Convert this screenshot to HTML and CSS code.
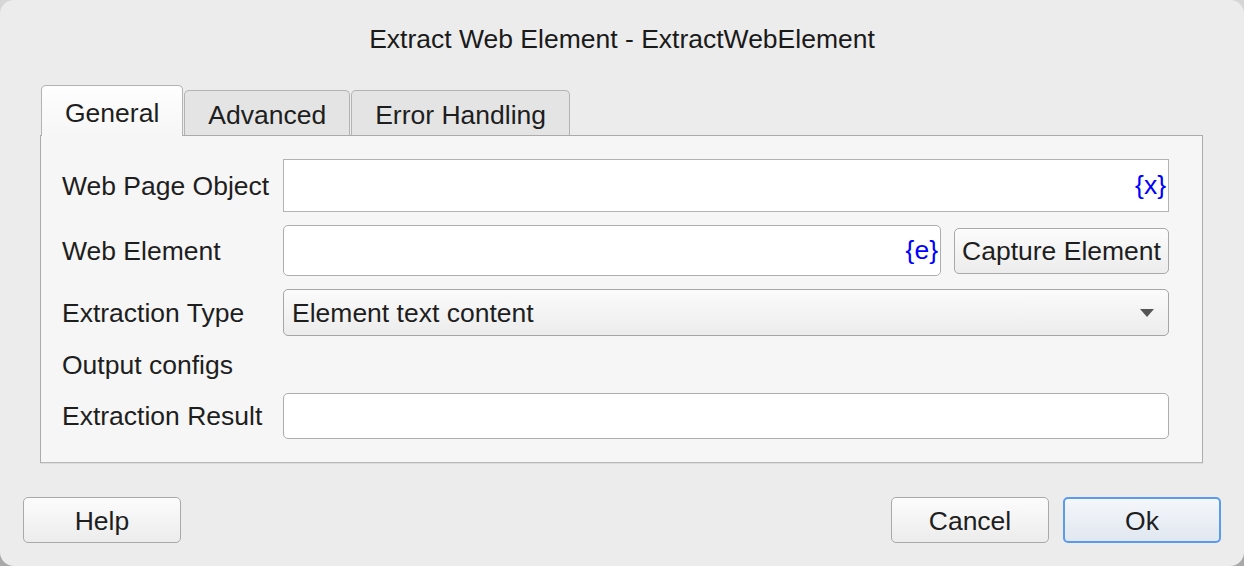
FILE: index.html
```html
<!DOCTYPE html>
<html>
<head>
<meta charset="utf-8">
<link rel="stylesheet" href="styles.css">
</head>
<body>
<div class="window">
  <div class="title">Extract Web Element - ExtractWebElement</div>
  <div class="tabs">
    <div class="tab active">General</div>
    <div class="tab">Advanced</div>
    <div class="tab">Error Handling</div>
  </div>
  <div class="panel">
    <div class="label">Web Page Object</div>
    <div class="field square"><span class="var">{x}</span></div>

    <div class="label">Web Element</div>
    <div class="split">
      <div class="field rounded"><span class="var">{e}</span></div>
      <div class="btn capture">Capture Element</div>
    </div>

    <div class="label">Extraction Type</div>
    <div class="select"><span>Element text content</span><span class="arrow"></span></div>

    <div class="label">Output configs</div>
    <div></div>

    <div class="label">Extraction Result</div>
    <div class="field rounded"></div>
  </div>
  <div class="footer">
    <div class="btn big">Help</div>
    <div class="right">
      <div class="btn big">Cancel</div>
      <div class="btn big primary">Ok</div>
    </div>
  </div>
</div>
</body>
</html>
```
FILE: styles.css
```css
html, body {
  margin: 0;
  padding: 0;
}
body {
  background: linear-gradient(#d6d6d6, #a8a8a8);
  width: 1244px;
  height: 566px;
  overflow: hidden;
  font-family: "Liberation Sans", Arial, sans-serif;
  font-size: 26.5px;
  color: #1e1e1e;
}
.window {
  box-sizing: border-box;
  width: 1244px;
  height: 566px;
  background: #ececec;
  border-radius: 14px;
  display: flex;
  flex-direction: column;
}
.title {
  height: 78px;
  line-height: 78px;
  text-align: center;
  color: #1a1a1a;
}
.tabs {
  display: flex;
  align-items: flex-end;
  margin: 7px 0 0 41px;
  height: 50px;
  position: relative;
  z-index: 1;
}
.tab {
  box-sizing: border-box;
  height: 45px;
  padding: 0 23px;
  margin-right: 1px;
  line-height: 48px;
  border: 1px solid #b3b3b3;
  border-bottom: none;
  border-radius: 5px 5px 0 0;
  background: #e4e4e4;
}
.tab.active {
  height: 51px;
  line-height: 54px;
  background: linear-gradient(#fefefe, #f6f6f6);
  margin-bottom: -1px;
}
.panel {
  box-sizing: border-box;
  margin: 0 41px 0 40px;
  height: 328px;
  background: #f6f6f6;
  border: 1px solid #ababab;
  border-bottom-color: #b8b8b8;
  box-shadow: 0 1px 0 #dcdcdc;
  padding: 23px 33px 0 21px;
  display: grid;
  grid-template-columns: 221px 1fr;
  grid-template-rows: 53px 51px 47px 31px 46px;
  row-gap: 13px;
}
.label {
  display: flex;
  align-items: center;
  padding-top: 1px;
}
.field {
  box-sizing: border-box;
  background: #fff;
  border: 1px solid #b3b3b3;
  display: flex;
  align-items: center;
  justify-content: flex-end;
  padding-right: 2px;
}
.field.rounded {
  border-radius: 5px;
  border-color: #adadad;
}
.var {
  color: #0000ff;
  font-size: 26.5px;
}
.split {
  display: flex;
  gap: 13px;
}
.split .field {
  flex: 1;
}
.btn {
  box-sizing: border-box;
  border: 1px solid #a9a9a9;
  border-radius: 5px;
  background: linear-gradient(#fcfcfc, #ececec);
  display: flex;
  align-items: center;
  justify-content: center;
  color: #1e1e1e;
}
.capture {
  margin: 3px 0 2px;
  width: 215px;
}
.select {
  box-sizing: border-box;
  border: 1px solid #a6a6a6;
  border-radius: 5px;
  background: linear-gradient(#fbfbfb, #ececec);
  display: flex;
  align-items: center;
  justify-content: space-between;
  padding: 1px 14px 0 8px;
}
.arrow {
  width: 0;
  height: 0;
  border-left: 7px solid transparent;
  border-right: 7px solid transparent;
  border-top: 8px solid #555;
}
.footer {
  display: flex;
  justify-content: space-between;
  padding: 34px 23px 0 23px;
}
.right {
  display: flex;
  gap: 14px;
}
.big {
  width: 158px;
  height: 46px;
  padding-top: 2px;
}
.primary {
  border: 2px solid #5a9cec;
  background: linear-gradient(#f4f7fb, #e1e7f0);
}
```
